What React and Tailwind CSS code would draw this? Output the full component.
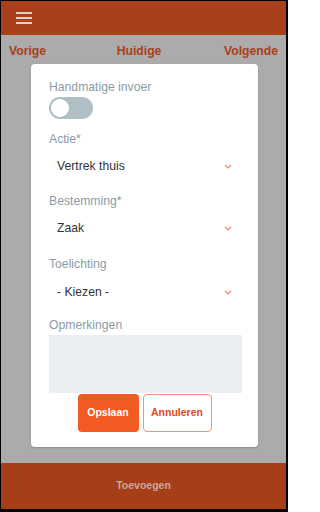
import { useState } from "react";

function Chevron() {
  return (
    <svg width="8" height="5" viewBox="0 0 8 5" className="shrink-0">
      <path d="M1 1 L4 4 L7 1" fill="none" stroke="#f08a60" strokeWidth="1.2" />
    </svg>
  );
}

function Label({ children, className = "" }) {
  return (
    <div className={`h-4 text-[12.2px] leading-4 text-[#8a9ba8] ${className}`}>{children}</div>
  );
}

function SelectRow({ value }) {
  return (
    <div className="flex h-7 items-center justify-between pl-2 pr-[10px] text-[12.2px] text-[#333]">
      <span>{value}</span>
      <Chevron />
    </div>
  );
}

export default function App() {
  const [manual, setManual] = useState(false);

  return (
    <div
      className="box-border h-[512px] w-[288px] border-t border-l border-r-2 border-b-[3px] border-black"
      style={{ fontFamily: '"Liberation Sans", Arial, sans-serif' }}
    >
      <div className="flex h-full flex-col bg-[#ababab]">
        <header className="flex h-[34px] shrink-0 items-center bg-[#a8401a] pl-[15px]">
          <div className="flex w-4 flex-col gap-[3px]">
            <span className="h-[2px] bg-[#e0cfc8]" />
            <span className="h-[2px] bg-[#e0cfc8]" />
            <span className="h-[2px] bg-[#e0cfc8]" />
          </div>
        </header>

        <div className="flex flex-1 flex-col">
          <nav className="flex h-[29px] items-center justify-between pl-2 pr-[8px] pt-[3px] text-[12.2px] font-bold text-[#a8401a]">
            <span>Vorige</span>
            <span className="pl-[8px]">Huidige</span>
            <span>Volgende</span>
          </nav>

          <div className="ml-[30px] w-[227px] rounded bg-white pb-[15px] pl-[18px] pr-4 pt-[15px] shadow-[0_1px_2px_rgba(0,0,0,0.2)]">
            <Label>Handmatige invoer</Label>
            <button
              onClick={() => setManual(!manual)}
              className="mt-[2px] flex h-[22px] w-[44px] items-center rounded-full bg-[#b0bec5] px-[2px]"
            >
              <span className={`h-[18px] w-[18px] rounded-full bg-white ${manual ? "ml-auto" : ""}`} />
            </button>

            <Label className="mt-3">Actie*</Label>
            <div className="mt-[5px]">
              <SelectRow value="Vertrek thuis" />
            </div>

            <Label className="mt-[13px]">Bestemming*</Label>
            <div className="mt-[5px]">
              <SelectRow value="Zaak" />
            </div>

            <Label className="mt-[14px]">Toelichting</Label>
            <div className="mt-[6px]">
              <SelectRow value="- Kiezen -" />
            </div>

            <Label className="mt-[11px]">Opmerkingen</Label>
            <textarea className="mt-[2px] block h-[58px] w-full resize-none bg-[#eceff1] outline-none" />

            <div className="mt-px flex justify-center gap-1 pr-[2px]">
              <button className="h-[38px] w-[61px] rounded-sm bg-[#f15a22] text-[10.5px] font-bold text-white">
                Opslaan
              </button>
              <button className="h-[38px] w-[69px] rounded-sm border border-[#f3937a] bg-white text-[10.5px] font-bold text-[#e8481a]">
                Annuleren
              </button>
            </div>
          </div>
        </div>

        <footer className="flex h-[46px] shrink-0 items-center justify-center bg-[#a63e17] text-[10.5px] font-bold text-[#c9a8a0]">
          Toevoegen
        </footer>
      </div>
    </div>
  );
}
